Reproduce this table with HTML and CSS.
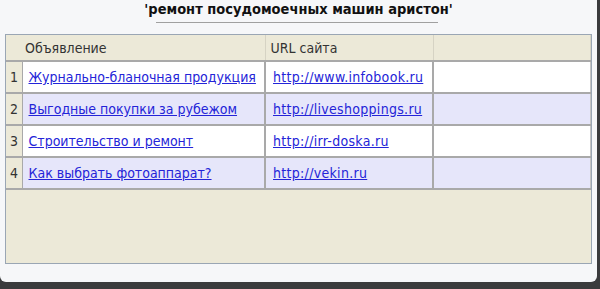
FILE: index.html
```html
<!DOCTYPE html>
<html lang="ru">
<head>
    <meta charset="UTF-8">
    <title>Объявления</title>
    <link rel="stylesheet" href="styles.css">
</head>
<body>
    <div class="window">
        <div class="caption">
            <h1>'ремонт посудомоечных машин аристон'</h1>
        </div>
        <div class="grid-frame">
            <table class="ads">
                <colgroup>
                    <col class="col-num">
                    <col class="col-title">
                    <col class="col-url">
                    <col class="col-extra">
                </colgroup>
                <thead>
                    <tr>
                        <th></th>
                        <th class="th-title">Объявление</th>
                        <th class="th-url">URL сайта</th>
                        <th></th>
                    </tr>
                </thead>
                <tbody>
                    <tr>
                        <td class="num">1</td>
                        <td class="title"><a href="#">Журнально-бланочная продукция</a></td>
                        <td class="url"><a href="#">http://www.infobook.ru</a></td>
                        <td></td>
                    </tr>
                    <tr class="alt">
                        <td class="num">2</td>
                        <td class="title"><a href="#">Выгодные покупки за рубежом</a></td>
                        <td class="url"><a href="#">http://liveshoppings.ru</a></td>
                        <td></td>
                    </tr>
                    <tr>
                        <td class="num">3</td>
                        <td class="title"><a href="#">Строительство и ремонт</a></td>
                        <td class="url"><a href="#">http://irr-doska.ru</a></td>
                        <td></td>
                    </tr>
                    <tr class="alt">
                        <td class="num">4</td>
                        <td class="title"><a href="#">Как выбрать фотоаппарат?</a></td>
                        <td class="url"><a href="#">http://vekin.ru</a></td>
                        <td></td>
                    </tr>
                </tbody>
            </table>
        </div>
    </div>
</body>
</html>
```

FILE: styles.css
```css
body {
    margin: 0;
    height: 289px;
    overflow: hidden;
    background: #3a3b3d;
    font-family: "DejaVu Sans Condensed", "DejaVu Sans", sans-serif;
}
.window {
    height: 282px;
    margin-right: 3px;
    background: #f6f7f9;
    border-radius: 0 0 6px 6px;
    box-sizing: border-box;
    padding: 0 5px 0 5px;
}
.caption {
    height: 34px;
    display: flex;
    justify-content: center;
}
/* title with a short grey rule under it */
h1 {
    margin: 0;
    padding: 1px 14px 0;
    height: 22px;
    font-size: 14.5px;
    font-weight: bold;
    color: #111;
    background: linear-gradient(to right, transparent 26px, #a0a0a0 26px, #a0a0a0 calc(100% - 29px), transparent calc(100% - 29px)) bottom / 100% 1px no-repeat;
}
.grid-frame {
    height: 228px;
    border: 1px solid #9aa6b4;
    background: #ece9d8;
}
.ads {
    width: 585px;
    border-collapse: collapse;
    font-size: 14px;
}
.col-num { width: 16px; }
.col-title { width: 243px; }
.col-url { width: 168px; }
th {
    height: 25px;
    padding: 0;
    text-align: left;
    font-weight: normal;
    color: #333;
    border-right: 1px solid #d6d3c4;
    border-bottom: 1px solid #c9c6b6;
}
th:first-child { border-right: none; }
.th-title { padding-left: 3px; }
.th-url { padding-left: 5px; }
td {
    height: 30px;
    padding: 0;
    background: #fff;
    border: 2px solid #a9a9a9;
    border-left-width: 1px;
}
tr.alt td { background: #e6e6fa; }
td.num {
    background: #ece9d8;
    border-left: none;
    border-right: none;
    color: #333;
    padding-left: 4px;
}
tr.alt td.num { background: #ece9d8; }
td:last-child { border-right-width: 1px; border-right-color: #c4c4c4; }
td.title { padding-left: 6px; }
td.url {
    padding-left: 7px;
    letter-spacing: 0.3px;
}
a {
    color: #2424d8;
}
```
